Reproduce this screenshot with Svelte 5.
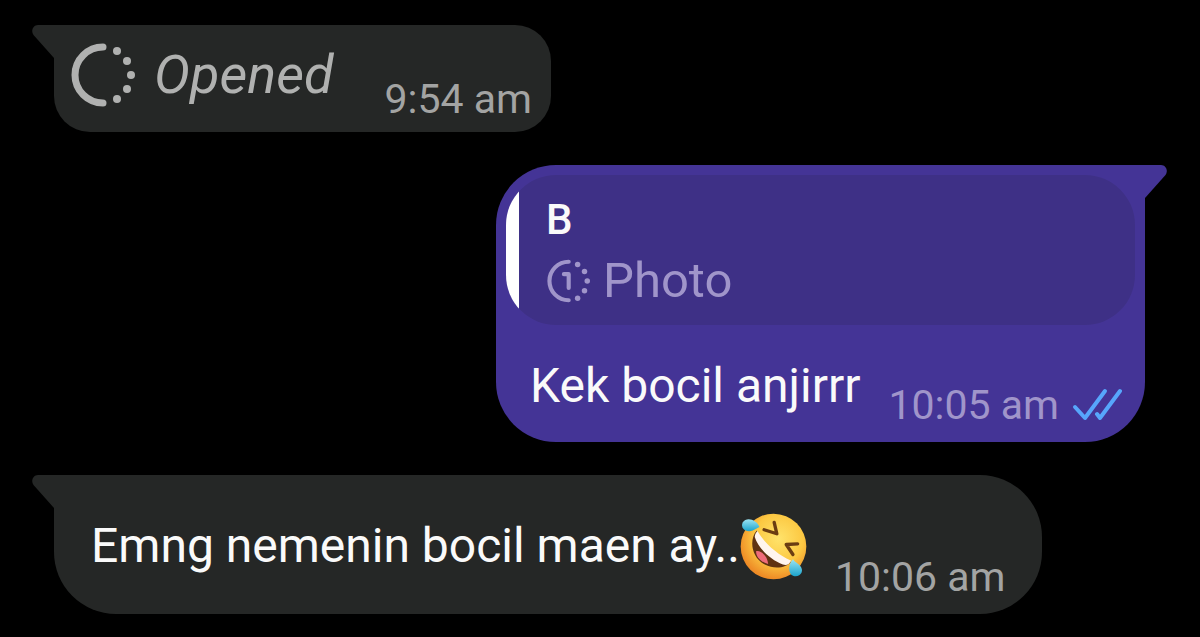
<script>
  const messages = [
    { id: 1, from: 'them', kind: 'opened', text: 'Opened', time: '9:54 am' },
    {
      id: 2,
      from: 'me',
      kind: 'reply',
      text: 'Kek bocil anjirrr',
      time: '10:05 am',
      quote: { name: 'B', label: 'Photo' },
      read: true
    },
    { id: 3, from: 'them', kind: 'plain', text: 'Emng nemenin bocil maen ay..', emoji: true, time: '10:06 am' }
  ];
</script>

<main class="chat">
  {#each messages as msg (msg.id)}
    <article class="bubble {msg.from} {msg.kind}">
      <svg class="tail" viewBox="0 0 24 34" aria-hidden="true">
        <path d="M24 0H6C1 0-1.500 6 1.500 10L22 33H24Z" />
      </svg>

      {#if msg.quote}
        <blockquote class="quote">
          <span class="name">{msg.quote.name}</span>
          <span class="media">
            <svg class="once-icon" viewBox="0 0 64 64" aria-hidden="true">
              <path d="M33 4A28 28 0 0 0 33 60" />
              <path class="digit" d="M26 22H33V42" />
              <g class="dots">
                <circle cx="46" cy="8" r="4" />
                <circle cx="56" cy="18" r="4" />
                <circle cx="60" cy="32" r="4" />
                <circle cx="56" cy="46" r="4" />
                <circle cx="46" cy="57" r="4" />
              </g>
            </svg>
            <span>{msg.quote.label}</span>
          </span>
        </blockquote>
      {/if}

      <div class="body">
        <p class="text">
          {#if msg.kind === 'opened'}
            <svg class="opened-icon" viewBox="0 0 64 64" aria-hidden="true">
              <path d="M32 4A28 28 0 0 0 32 60" />
              <g class="dots">
                <circle cx="46" cy="8" r="4" />
                <circle cx="56" cy="18" r="4" />
                <circle cx="60" cy="32" r="4" />
                <circle cx="56" cy="46" r="4" />
                <circle cx="46" cy="56" r="4" />
              </g>
            </svg>
          {/if}
          <span>{msg.text}</span>
          {#if msg.emoji}
            <svg class="emoji" viewBox="0 0 100 100" role="img" aria-label="rolling on the floor laughing">
              <defs>
                <radialGradient id="face" cx="58%" cy="38%" r="62%">
                  <stop offset="0" stop-color="#ffe36b" />
                  <stop offset="0.600" stop-color="#fcc842" />
                  <stop offset="1" stop-color="#ee8b26" />
                </radialGradient>
                <linearGradient id="tear" x1="0" y1="0" x2="0" y2="1">
                  <stop offset="0" stop-color="#9be4f3" />
                  <stop offset="1" stop-color="#1ba4cc" />
                </linearGradient>
              </defs>
              <circle cx="50" cy="50" r="49" fill="url(#face)" />
              <path d="M25 26C13 40 17 66 37 77C51 84 69 82 76 73C54 65 36 48 25 26Z" fill="#5f3212" />
              <path d="M24 57C31 55 41 64 42 76C31 73 24 66 24 57Z" fill="#ef6c7a" />
              <path d="M26 27C37 45 54 61 76 71C74 77 69 79 64 77C45 70 27 52 22 36C22 32 24 29 26 27Z" fill="#fff5ee" />
              <path class="eye" d="M51 14L55 31L36 25" />
              <path class="eye" d="M86 46L69 47L79 62" />
              <path d="M29 21C25 10 10 5 4 14C0 22 9 30 19 26Z" fill="url(#tear)" />
              <path d="M79 69C72 76 71 91 80 94C91 96 96 86 90 79C87 75 82 74 79 69Z" fill="url(#tear)" />
            </svg>
          {/if}
        </p>
        <div class="meta">
          <time>{msg.time}</time>
          {#if msg.read}
            <svg class="ticks" viewBox="0 0 50 34" role="img" aria-label="Read">
              <path d="M3 19L13 30L33 3" />
              <path d="M25 26L28 30L48 3" />
            </svg>
          {/if}
        </div>
      </div>
    </article>
  {/each}
</main>

<style>
  :global(body) {
    background: #000;
  }

  .chat {
    display: flex;
    flex-direction: column;
    gap: 33px;
    padding: 25px 55px 22px 54px;
    font-family: Roboto, sans-serif;
  }

  .bubble {
    position: relative;
    width: fit-content;
    color: #fafafa;
    fill: #252726;
    background: #252726;
    border-radius: 0 62px 62px 62px;
  }

  .me {
    align-self: flex-end;
    fill: #443496;
    background: #443496;
    border-radius: 60px 0 60px 60px;
  }

  .opened {
    border-radius: 0 36px 36px 36px;
  }

  /* corner pointer, mirrored for outgoing messages */
  .tail {
    position: absolute;
    top: 0;
    right: calc(100% - 2px);
    width: 24px;
    height: 34px;
  }

  .me .tail {
    right: auto;
    left: calc(100% - 2px);
    transform: scaleX(-1);
  }

  .body {
    display: flex;
    align-items: flex-end;
    gap: 28px;
    padding: 43px 37px 13px;
  }

  .opened .body {
    gap: 51px;
    padding: 20px 19px 9px 17px;
  }

  .reply .body {
    padding: 33px 23px 13px 34px;
  }

  .text {
    display: flex;
    align-items: center;
    margin: 0 0 27px;
    font-size: 48px;
    line-height: 56px;
    white-space: nowrap;
  }

  .reply .text {
    margin-bottom: 15px;
  }

  .opened .text {
    gap: 19px;
    margin-bottom: 18px;
    font-size: 54px;
    font-style: italic;
    line-height: 60px;
    color: #b0b1b0;
  }

  .meta {
    display: flex;
    align-items: center;
    gap: 13px;
    margin-left: auto;
    font-size: 41px;
    line-height: 48px;
    color: #a3a4a3;
    white-space: nowrap;
  }

  .me .meta {
    color: #a095ca;
  }

  .reply {
    padding-top: 10px;
  }

  .quote {
    display: flex;
    flex-direction: column;
    gap: 7px;
    margin: 0 10px;
    padding: 20px 40px 15px;
    background: linear-gradient(to right, #fff 13px, #3e3086 13px);
    border-radius: 50px;
  }

  .name {
    font-size: 42px;
    font-weight: 500;
    line-height: 50px;
  }

  .media {
    display: flex;
    align-items: center;
    gap: 13px;
    font-size: 49px;
    line-height: 58px;
    color: #a095ca;
  }

  .opened-icon,
  .once-icon {
    flex-shrink: 0;
    fill: none;
    stroke: currentColor;
    stroke-width: 7;
    stroke-linecap: round;
    stroke-linejoin: round;
  }

  .opened-icon {
    width: 64px;
    height: 64px;
    margin: -2px 0;
  }

  .once-icon {
    width: 44px;
    height: 44px;
    stroke-width: 6;
  }

  .dots {
    fill: currentColor;
    stroke: none;
  }

  .emoji {
    width: 67px;
    height: 67px;
    margin: -6px 0;
  }

  .eye {
    fill: none;
    stroke: #6b3d12;
    stroke-width: 5;
    stroke-linecap: round;
    stroke-linejoin: round;
  }

  .ticks {
    width: 50px;
    height: 34px;
    fill: none;
    stroke: #57a6fc;
    stroke-width: 4;
    stroke-linecap: round;
    stroke-linejoin: round;
  }
</style>
